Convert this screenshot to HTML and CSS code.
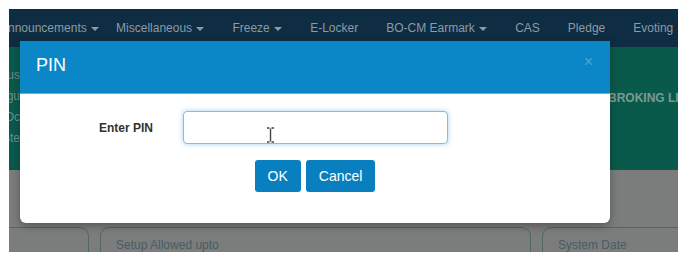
FILE: index.html
```html
<!DOCTYPE html>
<html lang="en">
<head>
    <meta charset="UTF-8">
    <title>PIN</title>
    <link rel="stylesheet" href="styles.css">
</head>
<body>
    <div class="screen">
        <div class="navbar">
            <a class="first">Announcements <span class="caret"></span></a>
            <a>Miscellaneous <span class="caret"></span></a>
            <a>Freeze <span class="caret"></span></a>
            <a>E-Locker</a>
            <a>BO-CM Earmark <span class="caret"></span></a>
            <a>CAS</a>
            <a>Pledge</a>
            <a>Evoting</a>
        </div>
        <div class="banner">
            <div class="banner-left">
                <span>Status</span>
                <span>Regu</span>
                <span>DOc</span>
                <span>Liste</span>
            </div>
            <div class="banner-right">BROKING LIMITED</div>
        </div>
        <div class="panels">
            <div class="card card-a"></div>
            <div class="card card-b">Setup Allowed upto</div>
            <div class="card card-c">System Date</div>
        </div>

        <div class="modal">
            <div class="modal-header">
                <h4>PIN</h4>
                <span class="close">&times;</span>
            </div>
            <div class="modal-body">
                <div class="form-row">
                    <label for="pin">Enter PIN</label>
                    <div class="input-wrap">
                        <input type="password" id="pin">
                        <svg class="ibeam" width="9" height="16" viewBox="0 0 9 16">
                            <path d="M1 1h2.5M5.5 1H8M4.5 1.5v13M1 15h2.5M5.5 15H8" stroke="#444" stroke-width="1.4" fill="none"/>
                        </svg>
                    </div>
                </div>
                <div class="actions">
                    <button type="button">OK</button>
                    <button type="button">Cancel</button>
                </div>
            </div>
        </div>
    </div>
</body>
</html>
```

FILE: styles.css
```css
body {
    margin: 0;
    background-color: #ffffff;
    font-family: "Liberation Sans", Arial, sans-serif;
}
.screen {
    position: relative;
    margin: 9px 0 0 9px;
    width: 669px;
    height: 243px;
    overflow: hidden;
    background-color: #7b7c7c;
}
.navbar {
    height: 38px;
    background-color: #0e2c42;
    display: flex;
    align-items: center;
    gap: 28px;
    white-space: nowrap;
    font-size: 12px;
    color: #8c9ba6;
}
.navbar .first {
    margin-left: -9px;
    margin-right: -11px;
}
.caret {
    display: inline-block;
    width: 0;
    height: 0;
    margin-left: 1px;
    vertical-align: middle;
    border-top: 4px solid #8c9ba6;
    border-left: 4px solid transparent;
    border-right: 4px solid transparent;
}
.banner {
    height: 123px;
    background-color: #0a5a4c;
    display: flex;
    justify-content: space-between;
}
.banner-left {
    width: 11px;
    overflow: hidden;
    display: flex;
    flex-direction: column;
    align-items: flex-end;
    padding-top: 22px;
    gap: 8px;
    font-size: 12px;
    color: #6f9088;
    line-height: 13px;
}
.banner-right {
    width: 70px;
    overflow: hidden;
    white-space: nowrap;
    padding-top: 44px;
    font-size: 12px;
    font-weight: bold;
    color: #7c9a93;
}
.panels {
    display: flex;
    gap: 11px;
    padding-top: 57px;
}
.card {
    height: 40px;
    border: 1px solid #4f6866;
    border-radius: 9px 9px 0 0;
    border-bottom: none;
    padding: 10px 15px 0;
    font-size: 12px;
    color: #485d66;
    box-sizing: border-box;
}
.card-a {
    width: 89px;
    flex-shrink: 0;
    margin-left: -9px;
    border-left: none;
}
.card-b {
    width: 431px;
    flex-shrink: 0;
}
.card-c {
    width: 160px;
    flex-shrink: 0;
}
.modal {
    position: absolute;
    left: 11px;
    top: 32px;
    width: 590px;
    background-color: #ffffff;
    border-radius: 0 0 6px 6px;
    box-shadow: 0 3px 8px rgba(0, 0, 0, 0.3);
}
.modal-header {
    height: 53px;
    background-color: #0b87c7;
    border-bottom: 1px solid #5fb3e0;
    display: flex;
    align-items: center;
    justify-content: space-between;
    padding: 0 16px;
    box-sizing: border-box;
}
.modal-header h4 {
    margin: 0;
    font-size: 18px;
    font-weight: normal;
    color: #ffffff;
    padding-bottom: 4px;
}
.close {
    font-size: 16px;
    color: #4ea4d2;
    margin-right: 1px;
    padding-bottom: 10px;
}
.modal-body {
    padding: 17px 0 31px;
}
.form-row {
    display: flex;
    align-items: center;
}
.form-row label {
    width: 133px;
    text-align: right;
    font-size: 12px;
    font-weight: bold;
    color: #333333;
}
.input-wrap {
    position: relative;
    margin-left: 30px;
}
.input-wrap input {
    display: block;
    width: 265px;
    height: 33px;
    box-sizing: border-box;
    border: 1px solid #7fc0e4;
    border-radius: 4px;
    box-shadow: 0 0 5px rgba(102, 175, 233, 0.6);
    outline: none;
}
.ibeam {
    position: absolute;
    left: 83px;
    top: 16px;
}
.actions {
    display: flex;
    justify-content: center;
    gap: 5px;
    margin-top: 16px;
}
.actions button {
    height: 32px;
    padding: 0 13px;
    background-color: #0a7fbf;
    color: #ffffff;
    border: none;
    border-radius: 3px;
    font-family: "Liberation Sans", Arial, sans-serif;
    font-size: 14px;
}
```
